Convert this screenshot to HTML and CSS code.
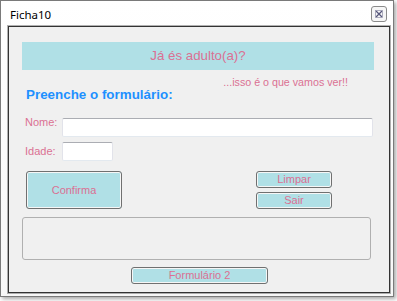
FILE: index.html
```html
<!DOCTYPE html>
<html>
<head>
<meta charset="utf-8">
<link rel="stylesheet" href="styles.css">
</head>
<body>
<div class="window">
  <div class="titlebar">
    <span class="title">Ficha10</span>
    <span class="close">
      <svg width="16" height="16" viewBox="0 0 16 16">
        <rect x="0.5" y="0.5" width="15" height="15" rx="2.5" fill="#f6f6f6" stroke="#8a8a8a"/>
        <path d="M5 5 L11 11 M11 5 L5 11" stroke="#55557a" stroke-width="1.3"/>
        <rect x="4.5" y="4.5" width="7" height="7" fill="none" stroke="#9a9ab0" stroke-width="0.8"/>
      </svg>
    </span>
  </div>
  <div class="client">
    <div class="banner">Já és adulto(a)?</div>
    <div class="sub">...isso é o que vamos ver!!</div>
    <div class="heading">Preenche o formulário:</div>
    <div class="field field-nome">
      <span class="label">Nome:</span>
      <span class="input input-wide"></span>
    </div>
    <div class="field field-idade">
      <span class="label">Idade:</span>
      <span class="input input-short"></span>
    </div>
    <div class="actions">
      <button class="btn btn-big">Confirma</button>
      <div class="stack">
        <button class="btn btn-small">Limpar</button>
        <button class="btn btn-small">Sair</button>
      </div>
    </div>
    <div class="panel"></div>
    <div class="footer">
      <button class="btn btn-form">Formulário 2</button>
    </div>
  </div>
</div>
</body>
</html>
```

FILE: styles.css
```css
* { box-sizing: border-box; }
html, body { margin: 0; padding: 0; background: #ffffff; }
body { width: 397px; height: 301px; overflow: hidden; }

.window {
  width: 394px;
  height: 297px;
  border: 1px solid #7a7a7a;
  background: linear-gradient(180deg, #ffffff 0%, #f7f7f7 100%);
  box-shadow: 2px 2px 4px rgba(0,0,0,0.35);
  padding: 0 3px 3px 7px;
  display: flex;
  flex-direction: column;
}

.titlebar {
  height: 25px;
  display: flex;
  align-items: center;
  justify-content: space-between;
  padding: 0 2px 0 2px;
}
.title {
  font-family: "Noto Sans", sans-serif;
  font-size: 11.5px;
  color: #000;
  margin-top: 1px;
}
.close {
  display: flex;
  width: 16px;
  height: 16px;
  margin-right: 1px;
}

.client {
  width: 382px;
  height: 267px;
  border: 1px solid #333333;
  box-shadow: 0 0 0 1px rgba(0,0,0,0.3);
  background: #f0f0f0;
  font-family: "Liberation Sans", Arial, sans-serif;
  font-size: 11px;
  color: #db7093;
}

.banner {
  margin: 15px 0 0 13px;
  width: 352px;
  height: 28px;
  line-height: 28px;
  background: #b0e0e6;
  text-align: center;
  font-size: 13.3px;
}

.sub {
  margin-top: 6px;
  height: 12px;
  line-height: 12px;
  text-align: right;
  padding-right: 41px;
  font-size: 10.7px;
}

.heading {
  margin-left: 17px;
  height: 14px;
  line-height: 14px;
  font-size: 13.4px;
  font-weight: bold;
  color: #1e90ff;
}

.field {
  display: flex;
  align-items: flex-start;
  padding-left: 16px;
}
.field-nome { margin-top: 16px; }
.field-idade { margin-top: 5px; }
.label {
  width: 37px;
  line-height: 13px;
}
.field-nome .label { margin-top: -2px; }
.field-idade .label { margin-top: 3px; }

.input {
  display: block;
  height: 19px;
  background: #fff;
  border: 1px solid #e2e3ea;
  border-top-color: #abadb3;
  border-bottom-color: #e3e9ef;
  border-radius: 2px;
}
.input-wide { width: 311px; }
.input-short { width: 51px; }

.actions {
  display: flex;
  margin: 10px 0 0 17px;
}
.btn {
  font-family: "Liberation Sans", Arial, sans-serif;
  font-size: 11px;
  color: #db7093;
  background: #b0e0e6;
  border: 1px solid #707070;
  border-radius: 3px;
  box-shadow: inset 0 0 0 1px #f6f6f6;
  padding: 0;
  margin: 0;
}
.btn-big { width: 96px; height: 38px; }
.stack {
  display: flex;
  flex-direction: column;
  gap: 4px;
  margin-left: 134px;
}
.btn-small { width: 76px; height: 17px; line-height: 15px; }

.panel {
  margin: 8px 0 0 13px;
  width: 349px;
  height: 43px;
  border: 1px solid #b0b0b0;
  border-radius: 3px;
}

.footer {
  margin: 7px 0 0 122px;
}
.btn-form { width: 137px; height: 17px; line-height: 15px; }
```
